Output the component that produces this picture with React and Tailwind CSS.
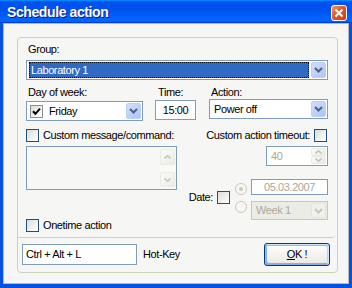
import React from "react";

const Check = () => (
  <svg width="9" height="9" viewBox="0 0 9 9">
    <path d="M1 4.2L3.4 6.8L8 1.6" fill="none" stroke="#000" strokeWidth="2" />
  </svg>
);

function CheckBox({ checked, gray }) {
  return (
    <div
      className={`w-[13px] h-[13px] shrink-0 border flex items-center justify-center bg-[linear-gradient(135deg,#DCDCD7,#FFFFFF)] ${
        gray ? "border-[#8E8F8F]" : "border-[#1C5180]"
      }`}
    >
      {checked && <Check />}
    </div>
  );
}

function Chevron({ up, color }) {
  return (
    <svg width="9" height="6" viewBox="0 0 9 6">
      <path
        d={up ? "M1 5L4.5 1.5L8 5" : "M1 1L4.5 4.5L8 1"}
        fill="none"
        stroke={color}
        strokeWidth="2"
      />
    </svg>
  );
}

function DropBtn({ disabled }) {
  return (
    <div
      className={`w-[15px] h-full shrink-0 rounded-[2px] border flex items-center justify-center ${
        disabled
          ? "border-[#E4E3DC] bg-[#F1F0EA]"
          : "border-[#BCD0FA] bg-[linear-gradient(135deg,#D2DFFD,#AEC3F4)]"
      }`}
    >
      <Chevron color={disabled ? "#C9C7BA" : "#4D6185"} />
    </div>
  );
}

function Combo({ children, disabled, small, className = "" }) {
  return (
    <div
      className={`border p-[1px] flex ${small ? "h-[19px]" : "h-[20px]"} ${
        disabled ? "border-[#C9C7BA] bg-[#ECECE6]" : "border-[#7F9DB9] bg-white"
      } ${className}`}
    >
      <div className="flex-1 min-w-0 flex items-center">{children}</div>
      <DropBtn disabled={disabled} />
    </div>
  );
}

function SmallBtn({ up, h }) {
  return (
    <div
      className={`w-full rounded-[2px] border border-[#EAE9E2] bg-[linear-gradient(135deg,#FAFAF8,#ECECE6)] flex items-center justify-center ${h}`}
    >
      <svg width="7" height="4" viewBox="0 0 7 4">
        <path
          d={up ? "M0.5 3.5L3.5 0.7L6.5 3.5" : "M0.5 0.5L3.5 3.3L6.5 0.5"}
          fill="none"
          stroke="#C9C7BA"
          strokeWidth="1.6"
        />
      </svg>
    </div>
  );
}

function Radio({ checked }) {
  return (
    <div className="w-[12px] h-[12px] rounded-full border border-[#CAC8BB] bg-[#F7F7F3] flex items-center justify-center">
      {checked && <div className="w-[4px] h-[4px] rounded-full bg-[#CAC8BB]" />}
    </div>
  );
}

function CloseIcon() {
  return (
    <svg width="16" height="16" viewBox="0 0 16 16">
      <defs>
        <linearGradient id="cg" x1="0" y1="0" x2="1" y2="1">
          <stop offset="0" stopColor="#F39A72" />
          <stop offset="0.45" stopColor="#E0592A" />
          <stop offset="1" stopColor="#C2400E" />
        </linearGradient>
      </defs>
      <rect x="0.5" y="0.5" width="15" height="15" rx="2.5" fill="url(#cg)" stroke="#FFFFFF" />
      <path d="M4.5 4.5L11.5 11.5M11.5 4.5L4.5 11.5" stroke="#FFFFFF" strokeWidth="2" />
    </svg>
  );
}

export default function App() {
  return (
    <div className="w-[352px] h-[288px] bg-[#0552E2] flex flex-col font-['Liberation_Sans',Arial,sans-serif] text-[11px] leading-[13px] tracking-[-0.4px] text-black overflow-hidden">
      {/* Title bar */}
      <div className="h-[23px] shrink-0 flex items-start pl-[7px] pr-[5px] bg-[linear-gradient(180deg,#0997ff,#0053ee_8%,#0050ee_40%,#06f_88%,#06f_93%,#005bff_95%,#003dd7_96%,#003dd7)]">
        <span className="mt-[5px] text-white text-[14px] leading-[14px] font-bold tracking-[-0.4px] [text-shadow:1px_1px_0_#0A1A7A]">
          Schedule action
        </span>
        <div className="ml-auto mt-[5px] w-[16px] h-[16px] shrink-0">
          <CloseIcon />
        </div>
      </div>

      {/* Client */}
      <div className="flex-1 ml-[3px] mr-[3px] mb-[4px] border border-[#B9B9B9] bg-[#F6F6F4] pt-[13px] pl-[13px] pr-[10px] pb-[10px] flex">
        <div className="flex-1 flex flex-col border border-[#D0D0BF] rounded-[4px]">
          {/* Inner section */}
          <div className="h-[200px] shrink-0 mr-[2px] border-b border-[#D0D0BF] rounded-br-[3px] pl-[8px] pt-[5px] flex flex-col">
            <div className="ml-[2px]">Group:</div>
            <Combo className="mt-[4px] w-[302px]">
              <div className="ml-[1px] mr-[2px] h-[16px] flex-1 bg-[#316AC5] border border-dotted border-black text-white flex items-center pl-[1px]">
                Laboratory 1
              </div>
            </Combo>

            <div className="mt-[6px] flex">
              <div className="w-[117px] flex flex-col">
                <div className="ml-[2px]">Day of week:</div>
                <Combo className="mt-[2px]">
                  <div className="ml-[2px]">
                    <CheckBox checked gray />
                  </div>
                  <span className="ml-[6px]">Friday</span>
                </Combo>
              </div>
              <div className="ml-[12px] w-[41px] flex flex-col">
                <div className="ml-[3px]">Time:</div>
                <div className="mt-[1px] h-[20px] border border-[#7F9DB9] bg-white flex items-center justify-center">
                  15:00
                </div>
              </div>
              <div className="ml-[13px] w-[119px] flex flex-col">
                <div className="ml-[2px]">Action:</div>
                <Combo>
                  <span className="pl-[3px]">Power off</span>
                </Combo>
              </div>
            </div>

            <div className="mt-[8px] w-[302px] flex items-center">
              <CheckBox />
              <span className="ml-[4px]">Custom message/command:</span>
              <span className="ml-auto">Custom action timeout:</span>
              <div className="ml-[4px] mr-[1px]">
                <CheckBox />
              </div>
            </div>

            <div className="mt-[4px] w-[302px] flex">
              <div className="w-[151px] flex flex-col">
                <div className="h-[44px] border border-[#7F9DB9] bg-[#F7F7F5] flex justify-end p-[1px]">
                  <div className="w-[15px] flex flex-col justify-between bg-[#F9F9F7]">
                    <div className="mt-[1px]">
                      <SmallBtn up h="h-[16px]" />
                    </div>
                    <div className="mb-[1px]">
                      <SmallBtn h="h-[15px]" />
                    </div>
                  </div>
                </div>
                <div className="mt-[29px] flex items-center">
                  <CheckBox />
                  <span className="ml-[4px]">Onetime action</span>
                </div>
              </div>

              <div className="flex-1 flex flex-col items-end">
                <div className="w-[62px] h-[20px] border border-[#7F9DB9] bg-white flex p-[1px]">
                  <div className="flex-1 flex items-center pl-[3px] text-[#ACA899]">40</div>
                  <div className="w-[15px] flex flex-col">
                    <SmallBtn up h="h-[8px]" />
                    <SmallBtn h="h-[8px]" />
                  </div>
                </div>

                <div className="mt-[13px] flex items-start">
                  <div className="mt-[12px] flex items-center">
                    <span>Date:</span>
                    <div className="ml-[4px]">
                      <CheckBox />
                    </div>
                  </div>
                  <div className="ml-[5px] mt-[4px] flex flex-col gap-[6px]">
                    <Radio checked />
                    <Radio />
                  </div>
                  <div className="ml-[4px] w-[77px] flex flex-col">
                    <div className="h-[16px] border border-[#7F9DB9] bg-white flex items-center justify-center text-[#ACA899]">
                      05.03.2007
                    </div>
                    <Combo disabled small className="mt-[6px]">
                      <span className="pl-[3px] text-[#ACA899]">Week 1</span>
                    </Combo>
                  </div>
                </div>
              </div>
            </div>
          </div>

          {/* Bottom row */}
          <div className="flex-1 flex items-start">
            <div className="ml-[4px] mt-[6px] flex items-center">
              <div className="w-[115px] h-[21px] border border-[#7F9DB9] bg-white flex items-center pl-[3px]">
                Ctrl + Alt + L
              </div>
              <span className="ml-[6px]">Hot-Key</span>
            </div>
            <div className="ml-auto mr-[7px] mt-[5px] w-[66px] h-[23px] rounded-[3px] border border-[#003C74] bg-[linear-gradient(180deg,#fff,#ecebe5_86%,#d8d0c4)] shadow-[inset_-1px_1px_#cee7ff,inset_1px_2px_#98b8ea,inset_-2px_2px_#bcd4f6,inset_1px_-1px_#89ade4,inset_2px_-2px_#89ade4] flex items-center justify-center">
              <span>
                <span className="underline">O</span>K !
              </span>
            </div>
          </div>
        </div>
      </div>
    </div>
  );
}
